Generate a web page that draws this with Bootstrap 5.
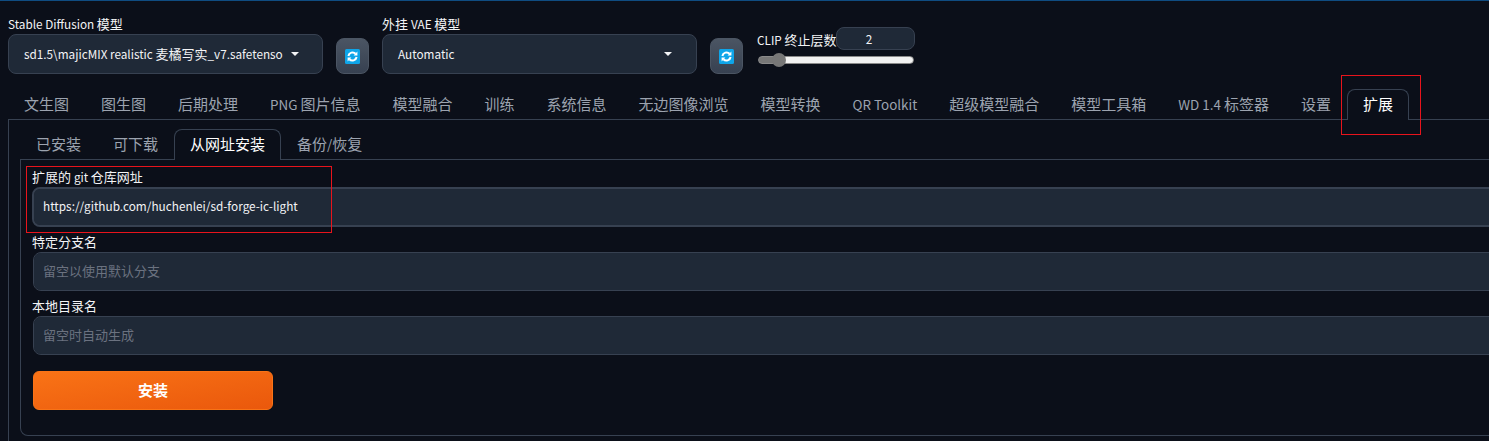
<!DOCTYPE html>
<html lang="en">
<head>
    <meta charset="UTF-8">
    <meta name="viewport" content="width=device-width, initial-scale=1.0">
    <title>extensions</title>
    <link href="https://cdn.jsdelivr.net/npm/bootstrap@5.3.0/dist/css/bootstrap.min.css" rel="stylesheet">
    <style>
        html, body {
            height: 441px;
            overflow: hidden;
        }
        body {
            background-color: #0b0f19;
            border-top: 1px solid #0f4c81;
            color: #f3f4f6;
            font-family: "Noto Sans CJK SC", "Noto Sans", sans-serif;
            font-size: 13px;
            line-height: 17px;
            position: relative;
        }
        .lat-txt {
            font-size: .905em;
        }
        .tab-strip .lat-txt {
            font-size: .895em;
        }
        .page-wrap {
            width: 1700px;
            padding: 0 8px;
        }
        .top-row {
            height: 88px;
            padding-top: 14px;
        }
        .field-label {
            display: block;
            color: #f3f4f6;
            font-size: 13px;
            line-height: 17px;
            margin-bottom: 2px;
        }
        .model-box {
            width: 315px;
            height: 40px;
            background-color: #1f2937;
            border: 1px solid #374151;
            border-radius: 8px;
            padding: 0 16px 2px 15px;
            font-size: 13px;
        }
        .model-box .caret-mark {
            width: 0;
            height: 0;
            margin-top: 2px;
            border-left: 4px solid transparent;
            border-right: 4px solid transparent;
            border-top: 4px solid #f3f4f6;
        }
        .refresh-btn {
            width: 33px;
            height: 36px;
            padding: 0;
            margin: 23px 13px 0 13px;
            background: linear-gradient(to bottom, #4b5563, #374151);
            border: 1px solid #4b5563;
            border-radius: 8px;
        }
        .clip-wrap {
            width: 158px;
            margin-left: 1px;
            margin-top: 12px;
        }
        .clip-label {
            white-space: nowrap;
            font-size: 13px;
            line-height: 17px;
            margin-top: 4px;
        }
        .clip-number {
            width: 79px;
            height: 23px;
            padding-right: 14px;
            background-color: #1f2937;
            border: 1px solid #374151;
            border-radius: 8px;
            text-align: center;
            line-height: 22px;
            font-size: 13px;
        }
        .clip-range {
            display: block;
            width: 156px;
            height: 14px;
            margin: 3px 0 0 1px;
            padding: 0;
            -webkit-appearance: none;
            appearance: none;
            background: transparent;
        }
        .clip-range::-webkit-slider-runnable-track {
            height: 8px;
            border: 1px solid #8a8a8a;
            border-radius: 4px;
            background: linear-gradient(to right, #777 0 13%, #f2f2f2 13% 100%);
        }
        .clip-range::-webkit-slider-thumb {
            -webkit-appearance: none;
            appearance: none;
            width: 14px;
            height: 14px;
            margin-top: -4px;
            border: 0;
            border-radius: 50%;
            background: #777;
        }
        .tab-strip {
            border-bottom: 1px solid #374151;
            flex-wrap: nowrap;
            height: 31px;
            margin: 0;
        }
        .tab-strip .nav-link {
            color: #9ca3af;
            background: transparent;
            border: 1px solid transparent;
            border-bottom: 0;
            border-radius: 8px 8px 0 0;
            font-size: 15px;
            line-height: 28px;
            height: 31px;
            padding: 0 15px;
            white-space: nowrap;
            margin: 0;
        }
        .tab-strip .nav-link.active {
            color: #fff;
            background: #0b0f19;
            border-color: #374151;
            position: relative;
            z-index: 1;
        }
        .outer-panel {
            border-left: 1px solid #374151;
            padding: 9px 0 0 11px;
            height: 330px;
        }
        .inner-panel {
            border: 1px solid #374151;
            border-top: 0;
            border-radius: 0 0 0 8px;
            height: 276px;
            padding: 7px 0 0 11px;
        }
        .inner-panel .field-label {
            margin: 0;
            line-height: 20px;
        }
        .field-block {
            margin-bottom: 5px;
        }
        .git-input {
            height: 39px;
            margin-left: 1px;
            width: calc(100% - 1px);
            background-color: #1f2937;
            border: 1px solid #374151;
            border-radius: 8px;
            color: #f3f4f6;
            font-size: 13px;
            padding: 0 9px 2px 9px;
            box-shadow: none;
        }
        .git-input::placeholder {
            color: #6b7280;
        }
        .git-input.git-focus {
            height: 40px;
            margin-left: 0;
            width: 100%;
            font-size: 11.8px;
            padding-bottom: 3px;
            border: 2px solid #374151;
        }
        .install-btn {
            display: block;
            width: 240px;
            height: 39px;
            margin: 16px 0 0 1px;
            padding: 0 0 2px 0;
            border: 1px solid #f97316;
            border-radius: 6px;
            background: linear-gradient(to bottom right, #f97316, #ea580c);
            color: #fff;
            font-size: 15px;
            font-weight: 700;
        }
        .red-mark {
            position: absolute;
            border: 1px solid #e8141c;
            pointer-events: none;
            z-index: 5;
        }
        .mark-tab { left: 1341px; top: 74px; width: 80px; height: 60px; }
        .mark-url { left: 26px; top: 165px; width: 306px; height: 67px; }
    </style>
</head>
<body>
    <div class="page-wrap">
        <div class="top-row d-flex align-items-start">
            <div>
                <label class="field-label"><span class="lat-txt">Stable Diffusion </span>模型</label>
                <div class="model-box d-flex align-items-center gap-2">
                    <span class="text-nowrap"><span class="lat-txt">sd1.5\majicMIX realistic </span>麦橘写实<span class="lat-txt">_v7.safetenso</span></span>
                    <span class="caret-mark"></span>
                </div>
            </div>
            <button class="refresh-btn d-flex align-items-center justify-content-center" type="button">
                <svg width="15" height="15" viewBox="0 0 15 15"><rect width="15" height="15" rx="1.5" fill="#0ea5e9"/><path d="M3.4 7A4.2 4.2 0 0 1 10.6 4.8M11.6 8A4.2 4.2 0 0 1 4.4 10.2" fill="none" stroke="#fff" stroke-width="2"/><path d="M8.6 6.4h3.8V2.6zM6.4 8.6H2.6v3.8z" fill="#fff"/></svg>
            </button>
            <div>
                <label class="field-label">外挂 <span class="lat-txt">VAE </span>模型</label>
                <div class="model-box d-flex align-items-center justify-content-between">
                    <span class="lat-txt">Automatic</span>
                    <span class="caret-mark me-2"></span>
                </div>
            </div>
            <button class="refresh-btn d-flex align-items-center justify-content-center" type="button">
                <svg width="15" height="15" viewBox="0 0 15 15"><rect width="15" height="15" rx="1.5" fill="#0ea5e9"/><path d="M3.4 7A4.2 4.2 0 0 1 10.6 4.8M11.6 8A4.2 4.2 0 0 1 4.4 10.2" fill="none" stroke="#fff" stroke-width="2"/><path d="M8.6 6.4h3.8V2.6zM6.4 8.6H2.6v3.8z" fill="#fff"/></svg>
            </button>
            <div class="clip-wrap">
                <div class="d-flex justify-content-between">
                    <span class="clip-label"><span class="lat-txt">CLIP </span>终止层数</span>
                    <div class="clip-number flex-shrink-0"><span class="lat-txt">2</span></div>
                </div>
                <input class="clip-range" type="range" min="1" max="12" value="2">
            </div>
        </div>

        <ul class="nav tab-strip" id="mainTabs"></ul>

        <div class="outer-panel">
            <ul class="nav tab-strip" id="subTabs"></ul>
            <div class="inner-panel">
                <div class="field-block">
                    <label class="field-label">扩展的 <span class="lat-txt">git </span>仓库网址</label>
                    <input class="form-control git-input git-focus" type="text" value="https://github.com/huchenlei/sd-forge-ic-light">
                </div>
                <div class="field-block">
                    <label class="field-label">特定分支名</label>
                    <input class="form-control git-input" type="text" placeholder="留空以使用默认分支">
                </div>
                <div class="field-block">
                    <label class="field-label">本地目录名</label>
                    <input class="form-control git-input" type="text" placeholder="留空时自动生成">
                </div>
                <button class="install-btn" type="button">安装</button>
            </div>
        </div>
    </div>

    <div class="red-mark mark-tab"></div>
    <div class="red-mark mark-url"></div>

    <script>
        // latin parts are wrapped because the CJK font draws them too wide
        var mainTabs = ["文生图", "图生图", "后期处理", '<span class="lat-txt">PNG </span>图片信息', "模型融合", "训练", "系统信息", "无边图像浏览", "模型转换", '<span class="lat-txt">QR Toolkit</span>', "超级模型融合", "模型工具箱", '<span class="lat-txt">WD 1.4 </span>标签器', "设置", "扩展"];
        var subTabs = ["已安装", "可下载", "从网址安装", '备份<span class="lat-txt">/</span>恢复'];

        function fillTabs(id, names, activeName) {
            var html = '';
            for (var i = 0; i < names.length; i++) {
                var cls = names[i] === activeName ? 'nav-link active' : 'nav-link';
                html += `<li class="nav-item"><a class="${cls}" href="#">${names[i]}</a></li>`;
            }
            document.getElementById(id).innerHTML = html;
        }

        fillTabs('mainTabs', mainTabs, '扩展');
        fillTabs('subTabs', subTabs, '从网址安装');
    </script>
</body>
</html>
